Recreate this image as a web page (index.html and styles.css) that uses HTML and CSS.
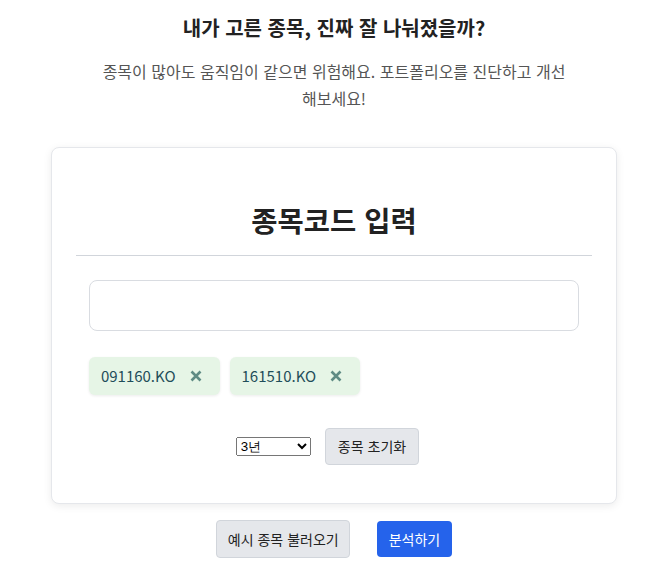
FILE: index.html
```html
<!DOCTYPE html>
<html lang="ko">
<head>
<meta charset="utf-8">
<link rel="stylesheet" href="styles.css">
</head>
<body>
<div class="page">
  <h1 class="title">내가 고른 종목, 진짜 잘 나눠졌을까?</h1>
  <p class="subtitle">종목이 많아도 움직임이 같으면 위험해요. 포트폴리오를 진단하고 개선 해보세요!</p>
  <div class="card">
    <h2 class="card-title">종목코드 입력</h2>
    <hr class="divider">
    <input class="code-input" type="text">
    <div class="tags">
      <span class="tag">091160.KO<span class="tag-x"><svg width="12" height="12" viewBox="0 0 12 12"><path d="M1.5 1.5L10.5 10.5M10.5 1.5L1.5 10.5" stroke="currentColor" stroke-width="2.6" stroke-linecap="butt"/></svg></span></span>
      <span class="tag">161510.KO<span class="tag-x"><svg width="12" height="12" viewBox="0 0 12 12"><path d="M1.5 1.5L10.5 10.5M10.5 1.5L1.5 10.5" stroke="currentColor" stroke-width="2.6" stroke-linecap="butt"/></svg></span></span>
    </div>
    <div class="controls">
      <select class="period">
        <option>3년</option>
        <option>1년</option>
        <option>5년</option>
      </select>
      <button class="btn btn-gray">종목 초기화</button>
    </div>
  </div>
  <div class="actions">
    <button class="btn btn-gray btn-lg">예시 종목 불러오기</button>
    <button class="btn btn-blue">분석하기</button>
  </div>
</div>
</body>
</html>
```
FILE: styles.css
```css
html, body {
  margin: 0;
  padding: 0;
  background: #ffffff;
}
body {
  font-family: "Noto Sans CJK KR", "Noto Sans", sans-serif;
  color: #222222;
}
.page {
  width: 640px;
  padding-left: 14px;
  padding-top: 14px;
  display: flex;
  flex-direction: column;
  align-items: center;
}
.title {
  margin: 0;
  font-size: 20px;
  line-height: 28.8px;
  font-weight: 700;
  color: #222222;
  text-align: center;
}
.subtitle {
  margin: 15px 0 0;
  max-width: 500px;
  font-size: 16px;
  line-height: 27px;
  color: #555555;
  text-align: center;
  word-break: keep-all;
}
.card {
  box-sizing: border-box;
  width: 566px;
  margin-top: 35px;
  padding: 53px 24px 38px;
  border: 1px solid #e5e7eb;
  border-radius: 8px;
  box-shadow: 0 2px 8px rgba(0, 0, 0, 0.08);
  background: #ffffff;
  display: flex;
  flex-direction: column;
  align-items: center;
}
.card-title {
  margin: 0;
  font-size: 28.5px;
  line-height: 38px;
  font-weight: 700;
  color: #222222;
}
.divider {
  align-self: stretch;
  margin: 16px 0 0;
  border: 0;
  border-top: 1px solid #d1d5db;
  height: 0;
}
.code-input {
  box-sizing: border-box;
  width: 95%;
  height: 51px;
  margin-top: 24px;
  border: 1px solid #d9dce1;
  border-radius: 8px;
  padding: 0 12px;
  font-size: 15px;
  font-family: inherit;
  outline: none;
}
.tags {
  width: 95%;
  margin-top: 26px;
  display: flex;
  gap: 10px;
}
.tag {
  display: flex;
  align-items: center;
  height: 38px;
  box-sizing: border-box;
  padding: 0 18px 0 12px;
  background: #e6f5e6;
  border-radius: 6px;
  box-shadow: 0 1px 3px rgba(0, 0, 0, 0.08);
  font-size: 15px;
  color: #1f4e5a;
}
.tag-x {
  display: flex;
  margin-left: 14px;
  color: #5f8b84;
}
.controls {
  margin-top: 33px;
  padding-right: 13px;
  display: flex;
  align-items: center;
  gap: 14px;
}
.period {
  width: 75px;
  height: 19px;
  font-size: 13.33px;
}
.btn {
  font-family: inherit;
  font-size: 14px;
  line-height: 20px;
  border-radius: 4px;
  cursor: pointer;
}
.btn-gray {
  background: #e5e7eb;
  border: 1px solid #d1d5db;
  color: #222222;
  padding: 7px 12px;
  height: 37px;
}
.btn-lg {
  height: 38px;
  padding: 8px 10.5px;
}
.btn-blue {
  background: #2563eb;
  border: 0;
  color: #ffffff;
  height: 36px;
  padding: 8px 11.5px;
}
.actions {
  margin-top: 16px;
  display: flex;
  align-items: center;
  gap: 27px;
}
```
